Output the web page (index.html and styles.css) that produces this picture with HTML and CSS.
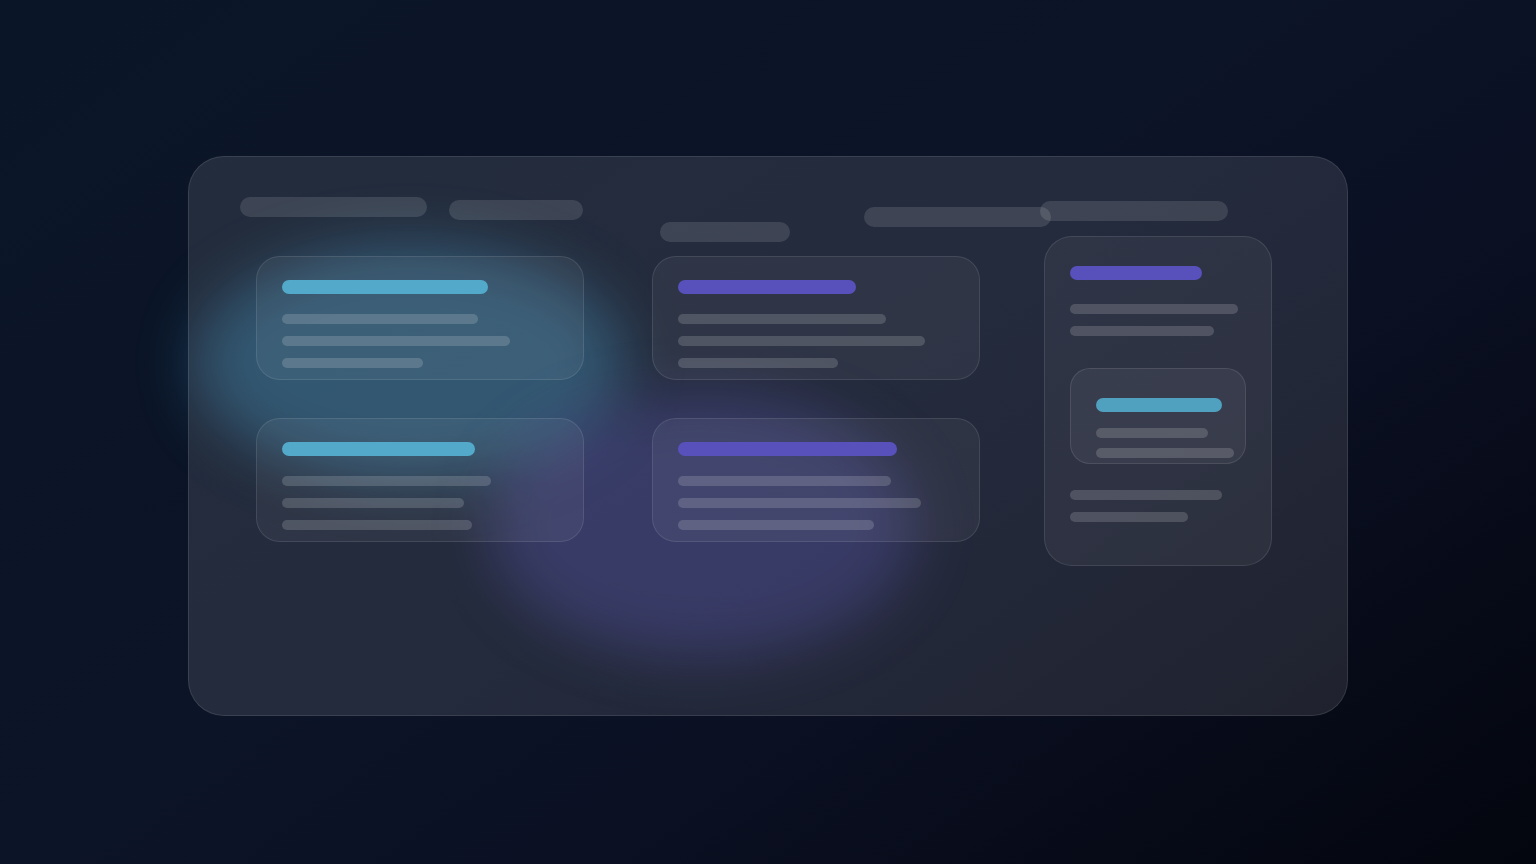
FILE: index.html
```html
<!DOCTYPE html>
<html lang="en">
<head>
<meta charset="utf-8">
<title>Board skeleton</title>
<link rel="stylesheet" href="styles.css">
</head>
<body>
<div class="stage">
  <div class="blob blob-teal"></div>
  <div class="blob blob-purple"></div>
  <section class="panel">
    <header class="head">
      <span class="pill p1"></span>
      <span class="pill p2"></span>
      <span class="pill p3"></span>
      <span class="pill p4"></span>
      <span class="pill p5"></span>
    </header>
    <div class="board">
      <div class="col col-1">
        <article class="card">
          <span class="title teal" style="width:206px"></span>
          <span class="line" style="width:196px"></span>
          <span class="line" style="width:228px"></span>
          <span class="line" style="width:141px"></span>
        </article>
        <article class="card">
          <span class="title teal" style="width:193px"></span>
          <span class="line" style="width:209px"></span>
          <span class="line" style="width:182px"></span>
          <span class="line" style="width:190px"></span>
        </article>
      </div>
      <div class="col col-2">
        <article class="card">
          <span class="title purple" style="width:178px"></span>
          <span class="line" style="width:208px"></span>
          <span class="line" style="width:247px"></span>
          <span class="line" style="width:160px"></span>
        </article>
        <article class="card">
          <span class="title purple" style="width:219px"></span>
          <span class="line" style="width:213px"></span>
          <span class="line" style="width:243px"></span>
          <span class="line" style="width:196px"></span>
        </article>
      </div>
      <div class="col col-3">
        <article class="card tall">
          <span class="title purple" style="width:132px"></span>
          <span class="line" style="width:168px"></span>
          <span class="line" style="width:144px"></span>
          <div class="nested">
            <span class="title teal" style="width:126px"></span>
            <span class="line" style="width:112px"></span>
            <span class="line" style="width:138px"></span>
          </div>
          <span class="line after" style="width:152px"></span>
          <span class="line" style="width:118px"></span>
        </article>
      </div>
    </div>
  </section>
</div>
</body>
</html>
```
FILE: styles.css
```css
* { box-sizing: border-box; }

html, body {
  margin: 0;
  height: 100%;
}

body {
  font-family: "Inter", "Liberation Sans", sans-serif;
  background: linear-gradient(145deg, #0a1627 0%, #0c1427 45%, #0b1023 65%, #03060e 100%);
  overflow: hidden;
}

.stage {
  position: relative;
  width: 1536px;
  height: 864px;
  padding-top: 156px;
  padding-left: 188px;
}

.blob {
  position: absolute;
  border-radius: 50%;
  filter: blur(28px);
  pointer-events: none;
}

.blob-teal {
  left: 195px;
  top: 245px;
  width: 430px;
  height: 235px;
  background: rgba(52, 140, 185, 0.4);
}

.blob-purple {
  left: 490px;
  top: 395px;
  width: 425px;
  height: 262px;
  background: rgba(92, 86, 210, 0.28);
}

.panel {
  position: relative;
  width: 1160px;
  height: 560px;
  border-radius: 36px;
  background: rgba(255, 255, 255, 0.1);
  border: 1px solid rgba(255, 255, 255, 0.1);
  padding: 40px 0 0 51px;
}

.head {
  display: flex;
  align-items: flex-start;
  height: 39px;
}

.pill {
  display: block;
  height: 20px;
  border-radius: 10px;
  background: rgba(255, 255, 255, 0.12);
  flex: none;
}

.p1 { width: 187px; }
.p2 { width: 134px; margin-left: 22px; margin-top: 3px; }
.p3 { width: 130px; margin-left: 77px; margin-top: 25px; }
.p4 { width: 187px; margin-left: 74px; margin-top: 10px; }
.p5 { width: 188px; margin-left: -11px; margin-top: 4px; }

.board {
  display: flex;
  align-items: flex-start;
  margin-left: 16px;
}

.col {
  display: flex;
  flex-direction: column;
  gap: 38px;
  flex: none;
}

.col-1, .col-2 {
  width: 328px;
  margin-top: 20px;
}

.col-2 { margin-left: 68px; }
.col-3 { width: 228px; margin-left: 64px; }

.card {
  display: flex;
  flex-direction: column;
  align-items: flex-start;
  height: 124px;
  padding: 23px 25px;
  border-radius: 24px;
  background: rgba(255, 255, 255, 0.05);
  border: 1px solid rgba(255, 255, 255, 0.1);
}

.title {
  display: block;
  flex: none;
  height: 14px;
  border-radius: 7px;
  margin-bottom: 20px;
}

.teal { background: #52a9c9; }
.purple { background: #5851bc; }

.line {
  display: block;
  flex: none;
  height: 10px;
  border-radius: 5px;
  background: rgba(255, 255, 255, 0.16);
  margin-bottom: 12px;
}

.card.tall {
  height: 330px;
  padding: 29px 25px;
  border-radius: 28px;
}

.card.tall > .title { margin-bottom: 24px; }

.nested {
  display: flex;
  flex-direction: column;
  align-items: flex-start;
  flex: none;
  width: 176px;
  height: 96px;
  margin-top: 20px;
  padding: 29px 25px 0;
  border-radius: 20px;
  background: rgba(255, 255, 255, 0.05);
  border: 1px solid rgba(255, 255, 255, 0.1);
}

.nested .title {
  margin-bottom: 16px;
  opacity: 0.92;
}

.nested .line { margin-bottom: 10px; }

.line.after { margin-top: 26px; }
```
